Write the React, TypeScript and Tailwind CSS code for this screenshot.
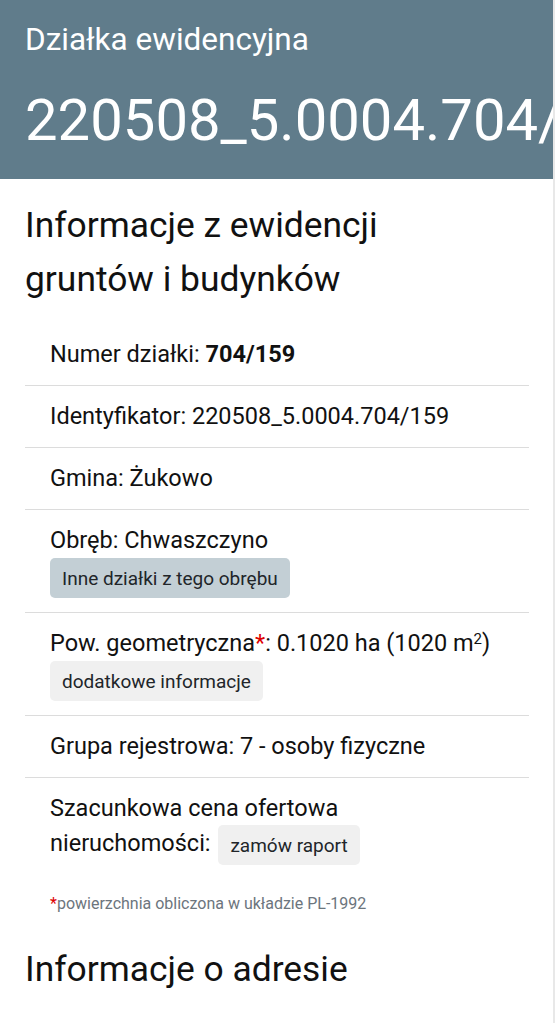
import type { ReactNode } from "react";

const rows: { key: string; body: ReactNode; last?: boolean }[] = [
  {
    key: "numer",
    body: (
      <>
        Numer działki: <b className="font-bold">704/159</b>
      </>
    ),
  },
  { key: "id", body: <>Identyfikator: 220508_5.0004.704/159</> },
  { key: "gmina", body: <>Gmina: Żukowo</> },
  {
    key: "obreb",
    body: (
      <>
        <div>Obręb: Chwaszczyno</div>
        <button className="mt-[1px] block h-10 rounded-[5px] bg-[#c3cfd5] px-[12px] text-[19px] text-[#212529]">
          Inne działki z tego obrębu
        </button>
      </>
    ),
  },
  {
    key: "pow",
    body: (
      <>
        <div>
          Pow. geometryczna<span className="text-[#d00]">*</span>: 0.1020 ha (1020 m
          <sup className="text-[15px]">2</sup>)
        </div>
        <button className="mt-[1px] block h-10 rounded-[5px] bg-[#f0f0f0] px-[12px] text-[19px] text-[#212529]">
          dodatkowe informacje
        </button>
      </>
    ),
  },
  { key: "grupa", body: <>Grupa rejestrowa: 7 - osoby fizyczne</> },
  {
    key: "cena",
    last: true,
    body: (
      <>
        Szacunkowa cena ofertowa
        <br />
        nieruchomości:{" "}
        <button className="ml-[2px] inline-block h-10 rounded-[5px] bg-[#f0f0f0] px-[12px] align-middle text-[19px] text-[#212529]">
          zamów raport
        </button>
      </>
    ),
  },
];

export default function App() {
  return (
    <div className="min-h-[1023px] border-r-2 border-[#e8e8e8] bg-white font-['Roboto',sans-serif] text-[#111]">
      <header className="h-[179px] overflow-hidden bg-[#607c8b] px-[25px] pt-[22px] text-white">
        <p className="text-[31.5px] leading-[36px]">Działka ewidencyjna</p>
        <p className="mt-[30px] whitespace-nowrap text-[58px] leading-[64px]">220508_5.0004.704/159</p>
      </header>

      <main className="pl-[25px] pr-[24px]">
        <h2 className="mt-[19px] text-[35.4px] leading-[54px]">
          Informacje z ewidencji
          <br />
          gruntów i budynków
        </h2>

        <ul className="mt-[18px]">
          {rows.map((row) => (
            <li
              key={row.key}
              className={
                row.last
                  ? "px-[25px] py-[14px] text-[23.5px] leading-[33px]"
                  : "border-b border-[#dcdcdc] px-[25px] py-[14px] text-[23.5px] leading-[33px]"
              }
            >
              {row.body}
            </li>
          ))}
        </ul>

        <p className="mt-[14px] pl-[25px] text-[16px] leading-[22px] text-[#6c757d]">
          <span className="text-[#d00]">*</span>powierzchnia obliczona w układzie PL-1992
        </p>

        <h2 className="mt-[27px] text-[35.4px] leading-[54px]">Informacje o adresie</h2>
      </main>
    </div>
  );
}
